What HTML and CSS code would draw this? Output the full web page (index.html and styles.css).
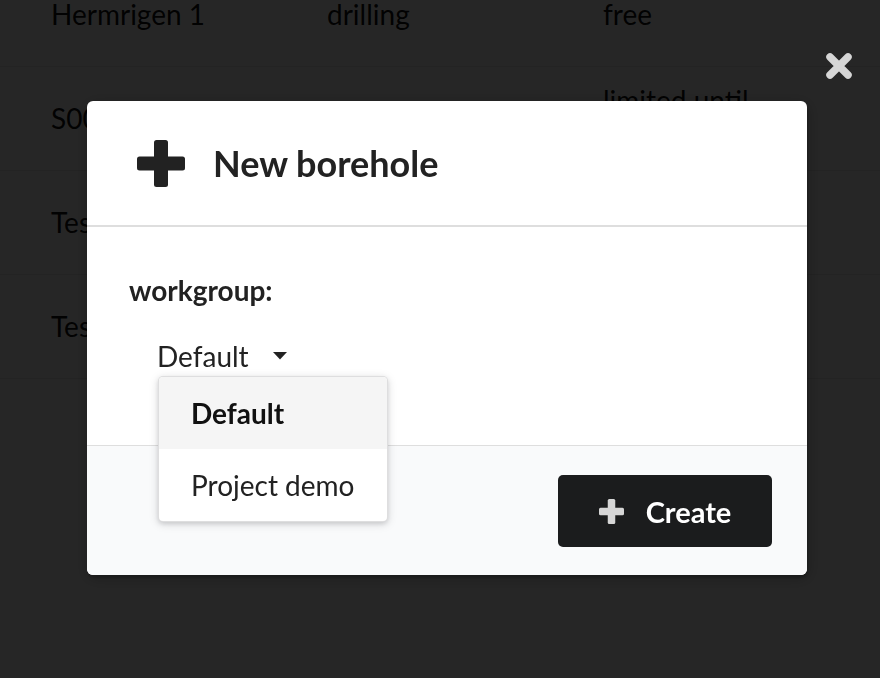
FILE: index.html
```html
<!DOCTYPE html>
<html>
<head>
<meta charset="utf-8">
<link rel="stylesheet" href="styles.css">
</head>
<body>
<div class="page">
  <table class="list">
    <tr><td>Hermrigen 1</td><td>drilling</td><td>free</td></tr>
    <tr><td>S0012</td><td></td><td class="multi">limited until<br>2021-12-31</td></tr>
    <tr><td>Test 1</td><td></td><td></td></tr>
    <tr><td>Test 2</td><td></td><td></td></tr>
  </table>
</div>
<div class="dimmer">
  <div class="close-x" aria-label="close">
    <svg width="28" height="28" viewBox="0 0 28 28"><path d="M5 5 L23 23 M23 5 L5 23" stroke="#d6d6d6" stroke-width="7.5" stroke-linecap="round"/></svg>
  </div>
  <div class="modal">
    <div class="modal-header">
      <svg class="hdr-icon" width="48" height="47" viewBox="0 0 48 47"><rect x="17" y="0" width="14" height="47" rx="2.5" fill="#222"/><rect x="0" y="16.5" width="48" height="14" rx="2.5" fill="#222"/></svg>
      <span class="hdr-title">New borehole</span>
    </div>
    <div class="modal-content">
      <div class="label">workgroup:</div>
      <div class="dropdown">
        <span class="dd-text">Default</span>
        <svg class="caret" width="14" height="8" viewBox="0 0 14 8"><path d="M0 0 H14 L7 7.5 Z" fill="#222"/></svg>
        <div class="dd-menu">
          <div class="dd-item selected">Default</div>
          <div class="dd-item">Project demo</div>
        </div>
      </div>
    </div>
    <div class="modal-actions">
      <button class="btn-create">
        <svg width="25" height="25" viewBox="0 0 25 25"><rect x="8.75" y="0" width="7.5" height="25" rx="1.5" fill="#d6d6d6"/><rect x="0" y="8.75" width="25" height="7.5" rx="1.5" fill="#d6d6d6"/></svg>
        <span>Create</span>
      </button>
    </div>
  </div>
</div>
</body>
</html>
```
FILE: styles.css
```css
html, body {
  margin: 0;
  padding: 0;
  background: #fff;
  font-family: Lato, "Noto Sans", sans-serif;
  color: rgba(0,0,0,0.95);
  overflow: hidden;
}
.page {
  width: 880px;
  height: 678px;
}
.list {
  border-collapse: collapse;
  width: 880px;
  margin-top: -38px;
  font-size: 28px;
  font-weight: 400;
}
.list td {
  height: 104px;
  padding: 0 20px 0 51px;
  border-bottom: 1px solid rgba(34,36,38,0.1);
  vertical-align: middle;
  line-height: 30px;
  box-sizing: border-box;
  white-space: nowrap;
}
.list td.multi { line-height: 36px; }
.list td:nth-child(1) { width: 276px; }
.list td:nth-child(2) { width: 276px; }
.dimmer {
  position: fixed;
  inset: 0;
  background: rgba(0,0,0,0.85);
  display: flex;
  align-items: flex-start;
  padding: 101px 0 0 87px;
  box-sizing: border-box;
}
.close-x {
  position: absolute;
  top: 52px;
  left: 825px;
  width: 28px;
  height: 28px;
}
.modal {
  width: 720px;
  background: #fff;
  border-radius: 6px;
  box-shadow: 1px 3px 3px 0 rgba(0,0,0,0.2), 1px 3px 15px 2px rgba(0,0,0,0.2);
}
.modal-header {
  height: 124px;
  display: flex;
  align-items: center;
  padding: 0 0 0 50px;
  gap: 28px;
  border-bottom: 2px solid #dedede;
  border-radius: 6px 6px 0 0;
}
.hdr-icon { flex: none; margin-top: 1px; }
.hdr-title {
  font-size: 36px;
  font-weight: 700;
  color: #222;
}
.modal-content {
  height: 218px;
  padding: 49px 42px 0 42px;
  box-sizing: border-box;
}
.label {
  font-size: 28px;
  font-weight: 700;
  color: #222;
  line-height: 28px;
}
.dropdown {
  position: relative;
  display: inline-flex;
  align-items: center;
  margin: 37px 0 0 28px;
  font-size: 28px;
  color: #222;
  line-height: 30px;
}
.caret { margin-left: 24px; }
.dd-menu {
  position: absolute;
  top: 35px;
  left: 1px;
  width: 228px;
  background: #fff;
  border: 1px solid rgba(34,36,38,0.15);
  border-radius: 5px;
  box-shadow: 0 2px 4px 0 rgba(34,36,38,0.12), 0 2px 10px 0 rgba(34,36,38,0.15);
  overflow: hidden;
  z-index: 5;
}
.dd-item {
  height: 72px;
  display: flex;
  align-items: center;
  padding-left: 32px;
  font-size: 28px;
  color: #222;
}
.dd-item.selected {
  background: #f5f5f5;
  font-weight: 700;
  color: #111;
}
.modal-actions {
  height: 130px;
  background: #f9fafb;
  border-top: 1px solid #dedede;
  border-radius: 0 0 6px 6px;
  display: flex;
  justify-content: flex-end;
  align-items: center;
  padding: 1px 35px 0 0;
  box-sizing: border-box;
}
.btn-create {
  width: 214px;
  height: 72px;
  background: #1b1c1d;
  border: none;
  border-radius: 5px;
  color: #fff;
  font-family: Lato, "Noto Sans", sans-serif;
  font-size: 29px;
  font-weight: 700;
  display: flex;
  align-items: center;
  justify-content: center;
  gap: 22px;
  padding: 0;
}
.btn-create svg { flex: none; }
```
